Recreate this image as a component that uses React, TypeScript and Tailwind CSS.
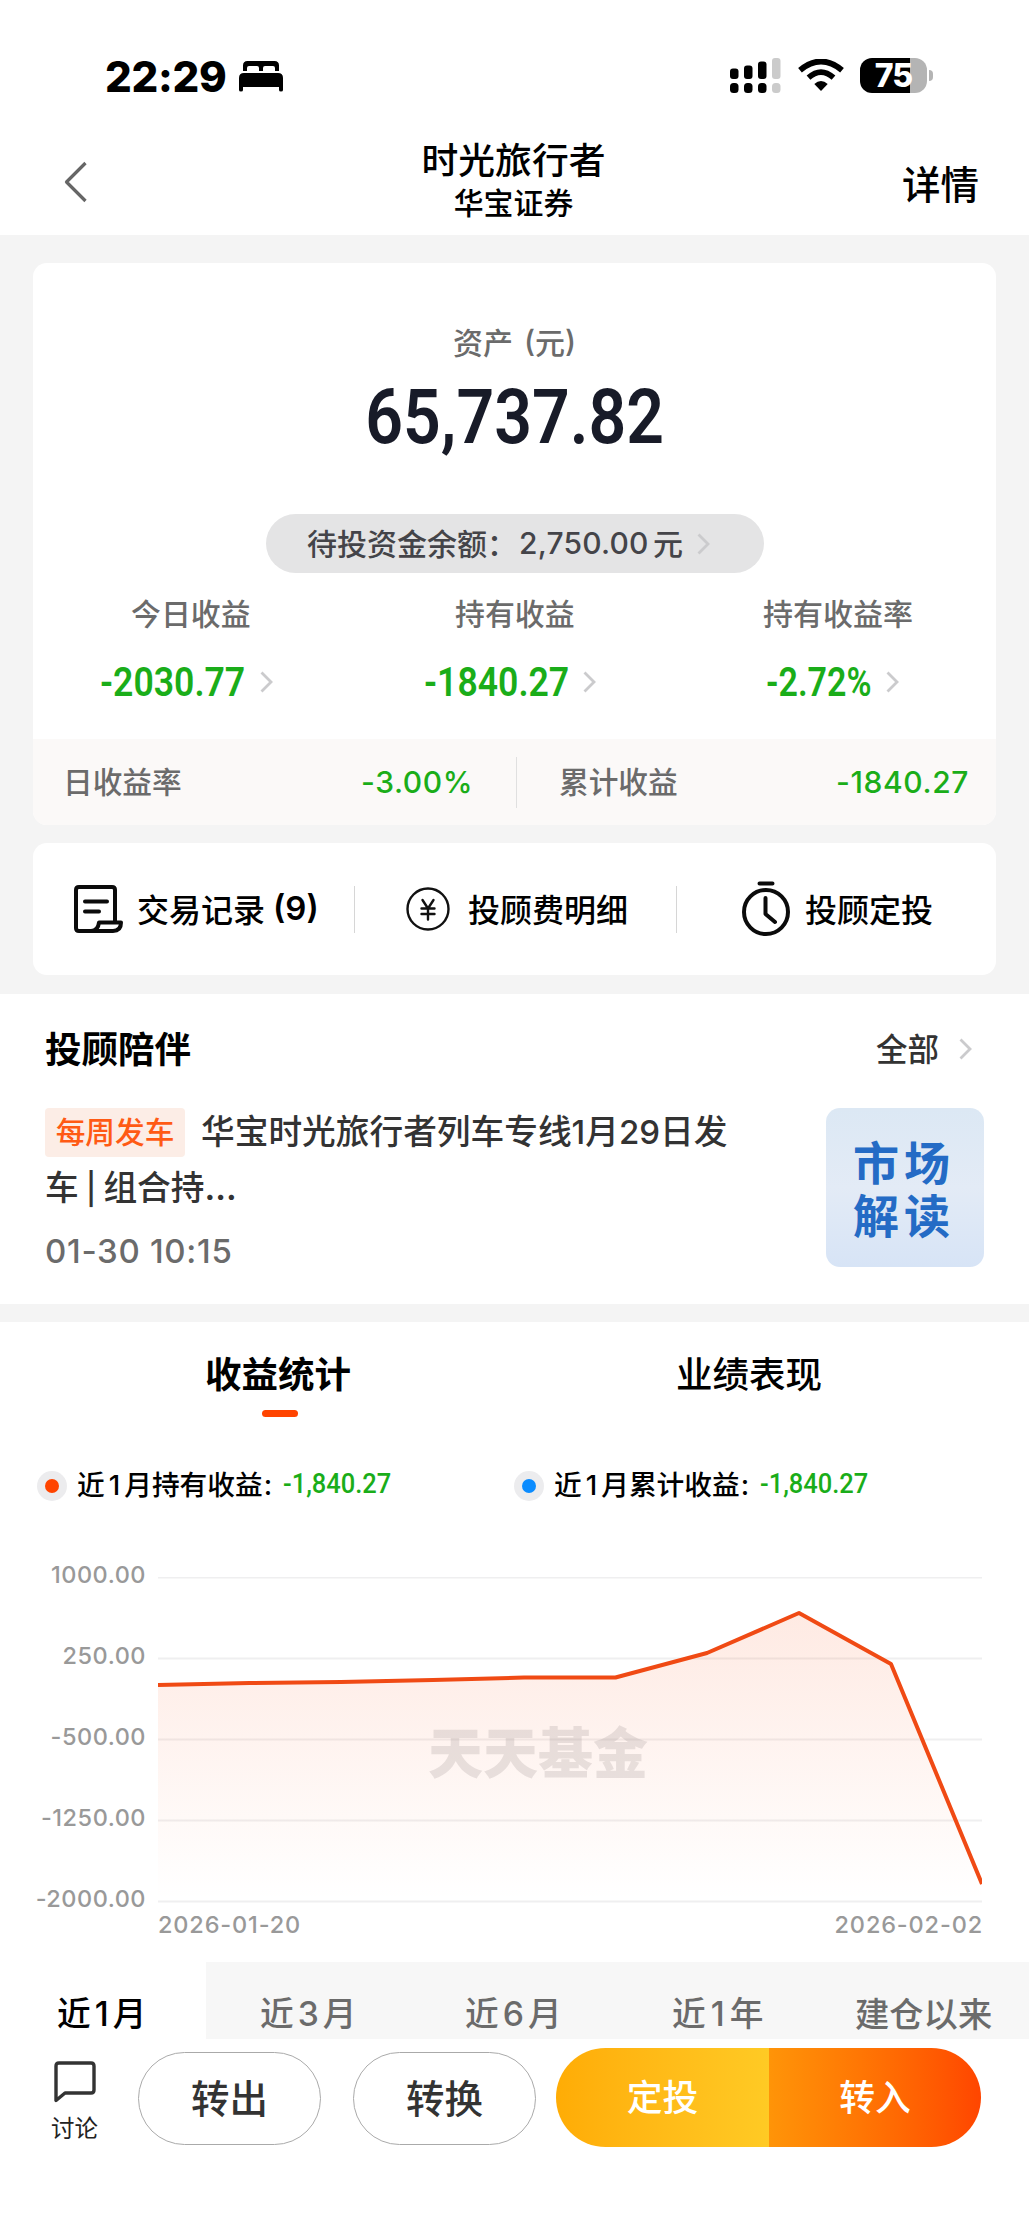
import React from 'react';

interface ChevronProps {
  className?: string;
}

const Chevron: React.FC<ChevronProps> = ({ className = '' }) => (
  <svg className={`h-6 w-[14px] shrink-0 ${className}`} viewBox="0 0 14 24" fill="none" stroke="#cbcbcd" strokeWidth="2.800">
    <path d="M1.500 2.500 11 12 1.500 21.500" />
  </svg>
);

const StatusBar = () => (
  <div className="flex h-[118px] items-start pt-[56px] pl-[105px]">
    <span className="w-[134px] font-[Inter] text-[42px] leading-[41px] font-extrabold tracking-[-0.3px]">22:29</span>
    <svg className="mt-[4px] h-[32px] w-[44px]" viewBox="0 0 44 32">
      <path d="M4 9V5.500Q4 1 8.500 1H35.500Q40 1 40 5.500V11H36V8Q36 6 34 6H26Q24 6 24 8V11H20V8Q20 6 18 6H10Q8 6 8 8V11H4Z" />
      <path d="M0 18Q0 13 5 13H39Q44 13 44 18V30Q44 31.500 42 31.500Q40 31.500 40 30V27H4V30Q4 31.500 2 31.500Q0 31.500 0 30Z" />
    </svg>
    <svg className="ml-[447px] mt-[2px] h-[35px] w-[51px]" viewBox="0 0 51 35">
      <rect x="0" y="10.500" width="8.500" height="10.500" rx="3" />
      <rect x="14" y="7.500" width="8.500" height="13.500" rx="3" />
      <rect x="28" y="3.500" width="8.500" height="17.500" rx="3" />
      <rect x="42" y="0" width="8.500" height="21" rx="3" fill="#cbcbcb" />
      <rect x="0" y="25" width="8.500" height="10" rx="3.500" />
      <rect x="14" y="25" width="8.500" height="10" rx="3.500" />
      <rect x="28" y="25" width="8.500" height="10" rx="3.500" />
      <rect x="42" y="25" width="8.500" height="10" rx="3.500" fill="#cbcbcb" />
    </svg>
    <svg className="ml-[17px] mt-[3px] h-[32px] w-[46px]" viewBox="0 0 46 32">
      <path d="M23 32 16.300 25.100Q23 19 29.700 25.100Z" />
      <path d="M10.500 18.700Q23 7.500 35.500 18.700" fill="none" stroke="#000" strokeWidth="5.600" />
      <path d="M2 11.200Q23-6.200 44 11.200" fill="none" stroke="#000" strokeWidth="5.800" />
    </svg>
    <div className="mt-[2px] ml-[16px] flex h-[35px] w-[67px] items-center justify-center rounded-[12px] bg-linear-to-r from-black from-75% to-[#b4b4b4] to-75%">
      <span className="font-[Inter] text-[32px] leading-[35px] font-extrabold tracking-[-1px] text-white">75</span>
    </div>
    <div className="mt-[14px] ml-[2px] h-[11px] w-[4px] rounded-r-full bg-[#b4b4b4]" />
  </div>
);

const Header = () => (
  <div className="flex h-[117px] items-start">
    <svg className="mt-[43px] ml-[64px] h-[42px] w-[23px]" viewBox="0 0 23 42" fill="none" stroke="#666" strokeWidth="3.200">
      <path d="M21.500 2 2.500 21 21.500 40" strokeLinejoin="round" />
    </svg>
    <div className="ml-[335px] flex w-[183px] flex-col items-center font-medium whitespace-nowrap">
      <h1 className="mt-[20px] text-[36.800px] leading-[40px]">时光旅行者</h1>
      <p className="mt-[7px] text-[29.900px] leading-[32px]">华宝证券</p>
    </div>
    <span className="mt-[44px] ml-[297px] text-[38.500px] leading-[40px] font-medium">详情</span>
  </div>
);

interface AmountProps {
  value: string;
  width: string;
  scale: string;
}

const Amount: React.FC<AmountProps> = ({ value, width, scale }) => (
  <div className="mt-[33px] flex h-[40px] items-center">
    <span className={`${width} shrink-0 pt-[3px]`}>
      <span className={`inline-block origin-left ${scale} font-[Roboto] text-[40px] leading-[40px] font-semibold text-[#1aad19]`}>{value}</span>
    </span>
    <Chevron className="mt-[2px]" />
  </div>
);

const SummaryCard = () => (
  <section className="mx-[33px] h-[562px] overflow-hidden rounded-[14px] bg-white">
    <div className="h-[476px]">
      <p className="flex items-center justify-center pt-[62px] text-[30px] leading-[32px] font-medium text-[#6b6b6b]">
        资产<span className="ml-[11px] font-[Inter] text-[30px]">(</span>元<span className="font-[Inter] text-[30px]">)</span>
      </p>
      <p className="mt-[22px] flex h-[76px] justify-center font-[Roboto] text-[76px] leading-[76px] font-semibold text-[#181b28]">
        <span className="scale-x-[0.87]">65,737.82</span>
      </p>
      <div className="mt-[59px] ml-[233px] flex h-[59px] w-[498px] items-center rounded-full bg-[#e4e4e5] pl-[41px] text-[30px] leading-[59px] font-medium whitespace-nowrap text-[#444449]">
        <span className="w-[212px] shrink-0 pb-[3px]">待投资金余额：</span>
        <span className="w-[134px] shrink-0 font-[Inter] text-[30px] tracking-[0.2px]">2,750.00</span>
        <span className="w-[44px] shrink-0 pb-[3px]">元</span>
        <Chevron />
      </div>
      <div className="flex pt-[23px] font-medium text-[#6b6b6b]">
        <div className="w-[324px] pl-[67px]">
          <p className="pl-[31px] text-[29.900px] leading-[32px]">今日收益</p>
          <Amount value="-2030.77" width="w-[160px]" scale="scale-x-[0.89]" />
        </div>
        <div className="w-[343px] pl-[67px]">
          <p className="pl-[31px] text-[29.900px] leading-[32px]">持有收益</p>
          <Amount value="-1840.27" width="w-[159px]" scale="scale-x-[0.89]" />
        </div>
        <div className="pl-[63px]">
          <p className="text-[30px] leading-[32px]">持有收益率</p>
          <div className="pl-[3px]">
            <Amount value="-2.72%" width="w-[120px]" scale="scale-x-[0.85]" />
          </div>
        </div>
      </div>
    </div>
    <div className="flex h-[86px] items-center bg-[#fbf9f8] text-[29.700px] leading-[32px] font-medium text-[#6b6b6b]">
      <span className="w-[328px] pb-[2px] pl-[30px]">日收益率</span>
      <span className="w-[155px] font-[Inter] text-[30px] tracking-[0.6px] text-[#1aad19]">-3.00%</span>
      <span className="h-[51px] w-px bg-[#e0e0e0]" />
      <span className="pb-[2px] pl-[42px]">累计收益</span>
      <span className="mr-[27px] ml-auto font-[Inter] text-[30px] tracking-[0.6px] text-[#1aad19]">-1840.27</span>
    </div>
  </section>
);

const Actions = () => (
  <section className="mx-[33px] mt-[18px] flex h-[132px] items-center rounded-[14px] bg-white text-[32px] leading-[36px] font-medium whitespace-nowrap">
    <div className="flex w-[321px] items-center pl-[41px]">
      <svg className="h-[48px] w-[49px]" viewBox="0 0 49 48" fill="none" stroke="#0b0b0b" strokeWidth="4" strokeLinecap="round" strokeLinejoin="round">
        <path d="M41 36V5Q41 2 38 2H5Q2 2 2 5V43Q2 46 5 46H39Q47 46 47 37.500H25Q24 46 17 46" />
        <path d="M11 16.500H33M11 26.500H25" />
      </svg>
      <span className="ml-[14px] pb-[3px]">交易记录</span>
      <span className="ml-[8px] pb-[2px] font-[Inter] text-[33px] font-semibold">(9)</span>
    </div>
    <span className="h-[47px] w-px bg-[#d6d6d6]" />
    <div className="flex w-[321px] items-center pl-[51px]">
      <svg className="h-[44px] w-[44px]" viewBox="0 0 44 44" fill="none" stroke="#111" strokeWidth="2.400" strokeLinecap="round">
        <circle cx="22" cy="22" r="20.500" />
        <path d="M16.500 13 22 21.500 27.500 13M22 21.500V32.500M15.500 21.500H28.500M15.500 27H28.500" />
      </svg>
      <span className="ml-[18px] pb-[3px]">投顾费明细</span>
    </div>
    <span className="h-[47px] w-px bg-[#d6d6d6]" />
    <div className="flex items-center pl-[65px]">
      <svg className="h-[56px] w-[48px]" viewBox="0 0 48 56" fill="none" stroke="#0b0b0b" strokeWidth="4" strokeLinecap="round" strokeLinejoin="round">
        <circle cx="24" cy="31" r="22" />
        <path d="M17.500 2.500H30.500M23.500 17V33L33 41" />
      </svg>
      <span className="ml-[15px] pb-[3px]">投顾定投</span>
    </div>
  </section>
);

const Companion = () => (
  <section className="h-[310px] bg-white px-[45px]">
    <div className="flex h-[114px] items-center pr-[11px]">
      <h2 className="mt-[-7px] text-[36.500px] leading-[40px] font-bold">投顾陪伴</h2>
      <span className="mt-[-8px] ml-auto mr-[20px] text-[31.500px] leading-[36px] font-medium text-[#333]">全部</span>
      <Chevron className="mt-[-4px]" />
    </div>
    <div className="flex justify-between">
      <div>
        <p className="flex h-[49px] items-center text-[33.700px] font-medium whitespace-nowrap text-[#333]">
          <span className="mr-[16px] flex h-[49px] w-[140px] items-center justify-center rounded-[4px] bg-[#fcede6] pb-[3px] text-[29.700px] text-[#ff5a14]">每周发车</span>
          <span className="pb-[3px]">华宝时光旅行者列车专线<span className="font-[Inter] text-[33px]">1</span>月<span className="font-[Inter] text-[33px]">29</span>日发</span>
        </p>
        <p className="mt-[9px] text-[33.700px] leading-[40px] font-medium text-[#333]">车<span className="mx-[7px] font-[Inter] text-[31px]">|</span>组合持<span className="font-[Inter] font-semibold">...</span></p>
        <p className="mt-[22px] font-[Inter] text-[33px] leading-[40px] font-medium tracking-[0.7px] text-[#6b6b6b]">01-30 10:15</p>
      </div>
      <div className="-ml-px flex h-[159px] w-[158px] flex-col items-center rounded-[14px] bg-linear-to-b from-[#dce8f4] via-[#e3ebf6] to-[#d7e4f6] pt-[26px] text-[46px] leading-[53px] font-bold tracking-[5px] text-[#246bc5]">
        <span className="-ml-[2px]">市场</span>
        <span className="-ml-[2px]">解读</span>
      </div>
    </div>
  </section>
);

interface LegendProps {
  label: string;
  dot: string;
}

const Legend: React.FC<LegendProps> = ({ label, dot }) => (
  <div className="flex w-[477px] items-center text-[27.700px] leading-[30px] font-medium whitespace-nowrap">
    <span className="flex h-[30px] w-[30px] items-center justify-center rounded-full bg-[#ececee]">
      <span className={`h-[14px] w-[14px] rounded-full ${dot}`} />
    </span>
    <span className="ml-[10px] w-[206px] pb-[3px]">近<span className="mx-[4px] font-[Inter]">1</span>月{label}<span className="ml-px font-[Inter]">:</span></span>
    <span className="origin-left scale-x-[0.91] pb-[3px] font-[Roboto] text-[28px] text-[#1aad19]">-1,840.27</span>
  </div>
);

const yLabels = ['1000.00', '250.00', '-500.00', '-1250.00', '-2000.00'];

const line = '0,108 91.5,106 183,105 275,103 366,100.500 457.500,100.500 549,76 641,36 733,87 824,307';

const Chart = () => (
  <div className="h-[385px] pl-[158px]">
    <div className="relative h-[340px] w-[824px]">
      <svg className="h-[340px] w-[824px]" viewBox="0 0 824 340">
        <defs>
          <linearGradient id="area" x1="0" y1="36" x2="0" y2="325" gradientUnits="userSpaceOnUse">
            <stop offset="0" stopColor="#f94f14" stopOpacity="0.120" />
            <stop offset="0.900" stopColor="#f94f14" stopOpacity="0.010" />
            <stop offset="1" stopColor="#f94f14" stopOpacity="0" />
          </linearGradient>
        </defs>
        {[0, 81, 162, 243, 324].map((y) => (
          <line key={y} x1="0" x2="824" y1={y + 0.5} y2={y + 0.5} stroke="#efeff0" strokeWidth="2" />
        ))}
        <polygon points={`0,325 ${line} 824,325`} fill="url(#area)" />
        <polyline points={line} fill="none" stroke="#f04a14" strokeWidth="4" strokeLinejoin="round" />
      </svg>
      <span className="absolute top-[142px] left-[270px] text-[55px] leading-[60px] font-black whitespace-nowrap text-[#8c8080]/20">天天基金</span>
      <div className="absolute top-[-17px] right-[836px] flex flex-col items-end gap-[51px] font-[Inter] text-[23.500px] leading-[30px] font-medium tracking-[0.5px] text-[#999]">
        {yLabels.map((label) => (
          <span key={label}>{label}</span>
        ))}
      </div>
    </div>
    <div className="flex w-[825px] justify-between font-[Inter] text-[23.500px] leading-[30px] font-medium tracking-[0.85px] text-[#999]">
      <span className="-mt-[7px]">2026-01-20</span>
      <span className="-mt-[7px]">2026-02-02</span>
    </div>
  </div>
);

const Periods = () => (
  <div className="flex h-[77px] bg-[#f7f7f7] pt-[30px] text-[33.700px] leading-[40px] font-medium whitespace-nowrap text-[#6b6b6b]">
    <span className="-mt-[30px] w-[206px] bg-white pt-[30px] pl-[57px] text-black">近<span className="mx-[4px] font-[Inter]">1</span>月</span>
    <span className="w-[205px] pl-[54px]">近<span className="mx-[4px] font-[Inter]">3</span>月</span>
    <span className="w-[206px] pl-[54px]">近<span className="mx-[4px] font-[Inter]">6</span>月</span>
    <span className="w-[206px] pl-[55px]">近<span className="mx-[5px] font-[Inter]">1</span>年</span>
    <span className="pl-[32px] text-[34.300px]">建仓以来</span>
  </div>
);

const BottomBar = () => (
  <div className="flex h-[196px] items-start pt-[9px]">
    <div className="ml-[51px] flex w-[87px] flex-col">
      <svg className="mt-[13px] ml-[3px] h-[42px] w-[42px]" viewBox="0 0 42 42" fill="none" stroke="#333" strokeWidth="3.400" strokeLinejoin="round">
        <path d="M5 2H37Q40 2 40 5V29Q40 32 37 32H11L2 39.500V5Q2 2 5 2Z" />
      </svg>
      <span className="mt-[10px] text-[23.500px] leading-[28px] text-[#222]">讨论</span>
    </div>
    <button className="mt-[4px] h-[93px] w-[183px] rounded-full border-[1.500px] border-[#aaa] pb-[4px] text-[38.500px] font-medium text-[#333]">转出</button>
    <button className="mt-[4px] ml-[32px] h-[93px] w-[183px] rounded-full border-[1.500px] border-[#aaa] pb-[4px] text-[38.500px] font-medium text-[#333]">转换</button>
    <div className="ml-[20px] flex h-[99px] w-[425px] overflow-hidden rounded-full text-[35.800px] font-medium text-white">
      <button className="w-[213px] bg-linear-to-r from-[#ffac05] to-[#ffca24] pb-[4px]">定投</button>
      <button className="w-[212px] bg-linear-to-r from-[#ff9408] to-[#ff4500] pb-[4px]">转入</button>
    </div>
  </div>
);

const App: React.FC = () => {
  return (
    <div className="h-[2235px] w-[1029px] overflow-hidden bg-white font-['Noto_Sans_CJK_SC',sans-serif] text-black">
      <StatusBar />
      <Header />
      <div className="h-[759px] bg-[#f4f4f4] pt-[28px]">
        <SummaryCard />
        <Actions />
      </div>
      <Companion />
      <div className="h-[18px] bg-[#f4f4f4]" />
      <div className="h-[640px]">
        <div className="flex h-[143px] pt-[31px] pl-[205px] text-[36.500px] leading-[40px]">
          <div className="flex w-[471px] flex-col font-bold">
            <span>收益统计</span>
            <span className="mt-[17px] ml-[57px] h-[7px] w-[36px] rounded-full bg-[#ff4400]" />
          </div>
          <span className="font-medium">业绩表现</span>
        </div>
        <div className="flex h-[112px] items-start pt-[3px] pl-[37px]">
          <Legend label="持有收益" dot="bg-[#ff4400]" />
          <Legend label="累计收益" dot="bg-[#0b8cff]" />
        </div>
        <Chart />
      </div>
      <Periods />
      <BottomBar />
    </div>
  );
};

export default App;
